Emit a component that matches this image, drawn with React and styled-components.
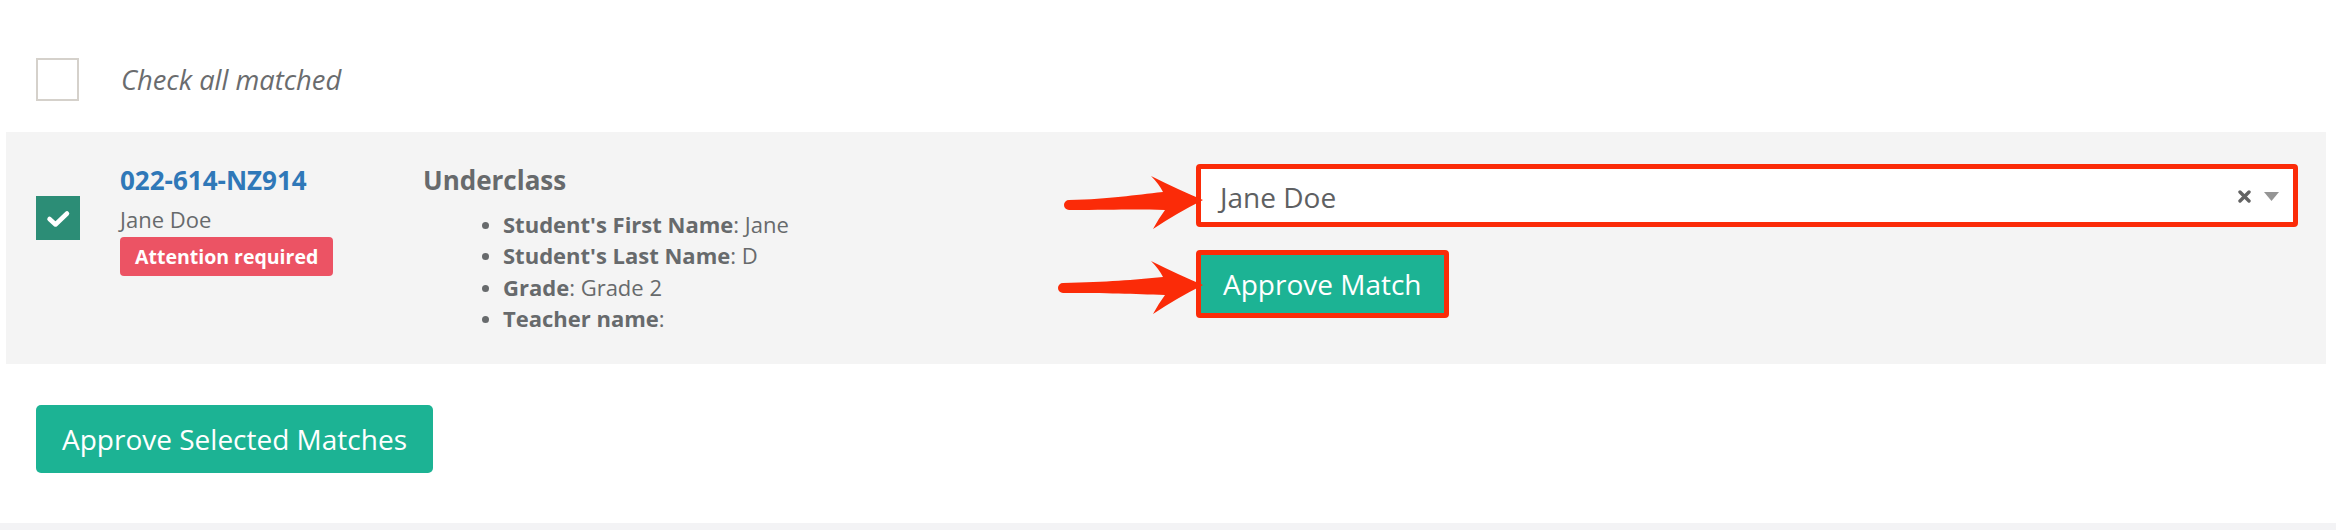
import React from "react";
import styled, { createGlobalStyle } from "styled-components";

const GlobalStyle = createGlobalStyle`
  html, body { margin: 0; padding: 0; background: #ffffff; }
  body { font-family: "Open Sans", "Liberation Sans", sans-serif; color: #676a6c; }
  * { box-sizing: border-box; }
`;

const Page = styled.div`
  width: 2336px;
`;

const Container = styled.div`
  margin: 0 10px 0 6px;
`;

const CheckAllRow = styled.label`
  display: flex;
  align-items: center;
  gap: 42px;
  padding: 58px 0 0 30px;
  height: 101px;
`;

const Box = styled.span`
  display: inline-flex;
  align-items: center;
  justify-content: center;
  flex: none;
  width: ${(p) => p.$size}px;
  height: ${(p) => p.$size}px;
  border: ${(p) => (p.$checked ? "none" : "2px solid #d5d1cb")};
  background: ${(p) => (p.$checked ? "#2c8d76" : "#ffffff")};
`;

const CheckAllText = styled.span`
  font-size: 27.3px;
  font-style: italic;
  color: #6a6c6e;
`;

const Panel = styled.div`
  margin-top: 31px;
  background: #f4f4f4;
  display: flex;
  height: 232px;
  padding-top: 30px;
`;

const LeftHalf = styled.div`
  width: 1160px;
  display: flex;
  padding-left: 30px;
`;

const BoxCell = styled.div`
  width: 84px;
  padding-top: 34px;
`;

const Info = styled.div`
  width: 303px;
  display: flex;
  flex-direction: column;
  align-items: flex-start;
`;

const Code = styled.a`
  font-size: 26px;
  font-weight: 700;
  line-height: 36px;
  color: #2f78b8;
  text-decoration: none;
`;

const Name = styled.div`
  margin-top: 6px;
  font-size: 22px;
  line-height: 31px;
  color: #676a6c;
`;

const Badge = styled.span`
  margin-top: 2px;
  display: inline-block;
  height: 39px;
  line-height: 39px;
  padding: 0 15px;
  border-radius: 4px;
  background: #ec5364;
  color: #ffffff;
  font-size: 19.5px;
  font-weight: 700;
`;

const Details = styled.div`
  display: flex;
  flex-direction: column;
`;

const Heading = styled.div`
  font-size: 26px;
  font-weight: 700;
  line-height: 36px;
  color: #676a6c;
`;

const FieldList = styled.ul`
  margin: 11px 0 0;
  padding-left: 80px;
  list-style: disc;
  font-size: 22px;
  line-height: 31.3px;
  color: #676a6c;
  li::marker { font-size: 20px; }
`;

const Label = styled.b`
  font-weight: 700;
`;

const RightHalf = styled.div`
  width: 1160px;
  padding: 2px 28px 0 30px;
  display: flex;
  flex-direction: column;
  align-items: flex-start;
  gap: 23px;
`;

const Highlight = styled.div`
  position: relative;
  border: 5px solid #fb2b08;
  border-radius: 4px;
  align-self: ${(p) => (p.$stretch ? "stretch" : "flex-start")};
`;

const Select = styled.div`
  height: 53px;
  background: #ffffff;
  display: flex;
  align-items: center;
  padding: 2px 14px 0 19px;
`;

const SelectValue = styled.span`
  flex: 1;
  font-size: 28px;
  color: #5e6062;
`;

const SelectIcons = styled.span`
  display: flex;
  align-items: center;
  gap: 13px;
`;

const ApproveButton = styled.button`
  border: none;
  margin: 0;
  background: #1cb394;
  color: #ffffff;
  font-family: "Open Sans", "Liberation Sans", sans-serif;
  font-size: 28px;
  height: ${(p) => p.$height}px;
  padding: 0 ${(p) => p.$pad}px;
  border-radius: ${(p) => p.$radius}px;
  display: block;
  cursor: pointer;
`;

const Footer = styled.div`
  padding: 41px 0 50px 30px;
`;

const BottomBand = styled.div`
  height: 7px;
  background: #f3f3f5;
`;

const ArrowSvg = styled.svg`
  position: absolute;
  right: 100%;
  margin-right: -2px;
  top: ${(p) => p.$top}px;
  overflow: visible;
`;

function Arrow({ length, top, drop }) {
  const L = length;
  const T = 28;
  const t = 6;
  const d = [
    `M ${t} ${T + drop - 5}`,
    `C ${L * 0.35} ${T + drop - 6}, ${L - 70} ${T - 5}, ${L - 40} ${T - 8}`,
    `Q ${L - 44} ${T - 16}, ${L - 52} ${T - 24}`,
    `Q ${L - 24} ${T - 10}, ${L} ${T}`,
    `Q ${L - 26} ${T + 13}, ${L - 50} ${T + 29}`,
    `Q ${L - 44} ${T + 18}, ${L - 38} ${T + 10}`,
    `C ${L - 70} ${T + 9}, ${L * 0.35} ${T + drop + 5}, ${t} ${T + drop + 5}`,
    `A 5 5 0 0 1 ${t} ${T + drop - 5}`,
    "Z",
  ].join(" ");
  return (
    <ArrowSvg $top={top - T} width={L} height={64} viewBox={`0 0 ${L} 64`}>
      <path d={d} fill="#fb2b08" />
    </ArrowSvg>
  );
}

function Check() {
  return (
    <svg width="44" height="44" viewBox="0 0 44 44">
      <polyline
        points="13.5,23 19.5,28.5 31,17.5"
        fill="none"
        stroke="#ffffff"
        strokeWidth="4.5"
        strokeLinecap="round"
        strokeLinejoin="round"
      />
    </svg>
  );
}

function ClearIcon() {
  return (
    <svg width="13" height="13" viewBox="0 0 13 13">
      <path d="M2 2 L11 11 M11 2 L2 11" stroke="#636363" strokeWidth="3.4" strokeLinecap="round" />
    </svg>
  );
}

function Caret() {
  return (
    <svg width="15" height="9" viewBox="0 0 15 9">
      <path d="M0 0 L15 0 L7.5 9 Z" fill="#959595" />
    </svg>
  );
}

const fields = [
  { label: "Student's First Name", value: "Jane" },
  { label: "Student's Last Name", value: "D" },
  { label: "Grade", value: "Grade 2" },
  { label: "Teacher name", value: "" },
];

export default function App() {
  return (
    <Page>
      <GlobalStyle />
      <Container>
        <CheckAllRow>
          <Box $size={43} />
          <CheckAllText>Check all matched</CheckAllText>
        </CheckAllRow>

        <Panel>
          <LeftHalf>
            <BoxCell>
              <Box $size={44} $checked>
                <Check />
              </Box>
            </BoxCell>
            <Info>
              <Code href="#">022-614-NZ914</Code>
              <Name>Jane Doe</Name>
              <Badge>Attention required</Badge>
            </Info>
            <Details>
              <Heading>Underclass</Heading>
              <FieldList>
                {fields.map((f) => (
                  <li key={f.label}>
                    <Label>{f.label}</Label>: {f.value}
                  </li>
                ))}
              </FieldList>
            </Details>
          </LeftHalf>

          <RightHalf>
            <Highlight $stretch>
              <Arrow length={140} top={31} drop={5} />
              <Select>
                <SelectValue>Jane Doe</SelectValue>
                <SelectIcons>
                  <ClearIcon />
                  <Caret />
                </SelectIcons>
              </Select>
            </Highlight>
            <Highlight>
              <Arrow length={146} top={30} drop={3} />
              <ApproveButton $height={58} $pad={22} $radius={0}>
                Approve Match
              </ApproveButton>
            </Highlight>
          </RightHalf>
        </Panel>

        <Footer>
          <ApproveButton $height={68} $pad={26} $radius={5}>
            Approve Selected Matches
          </ApproveButton>
        </Footer>
      </Container>
      <BottomBand />
    </Page>
  );
}
